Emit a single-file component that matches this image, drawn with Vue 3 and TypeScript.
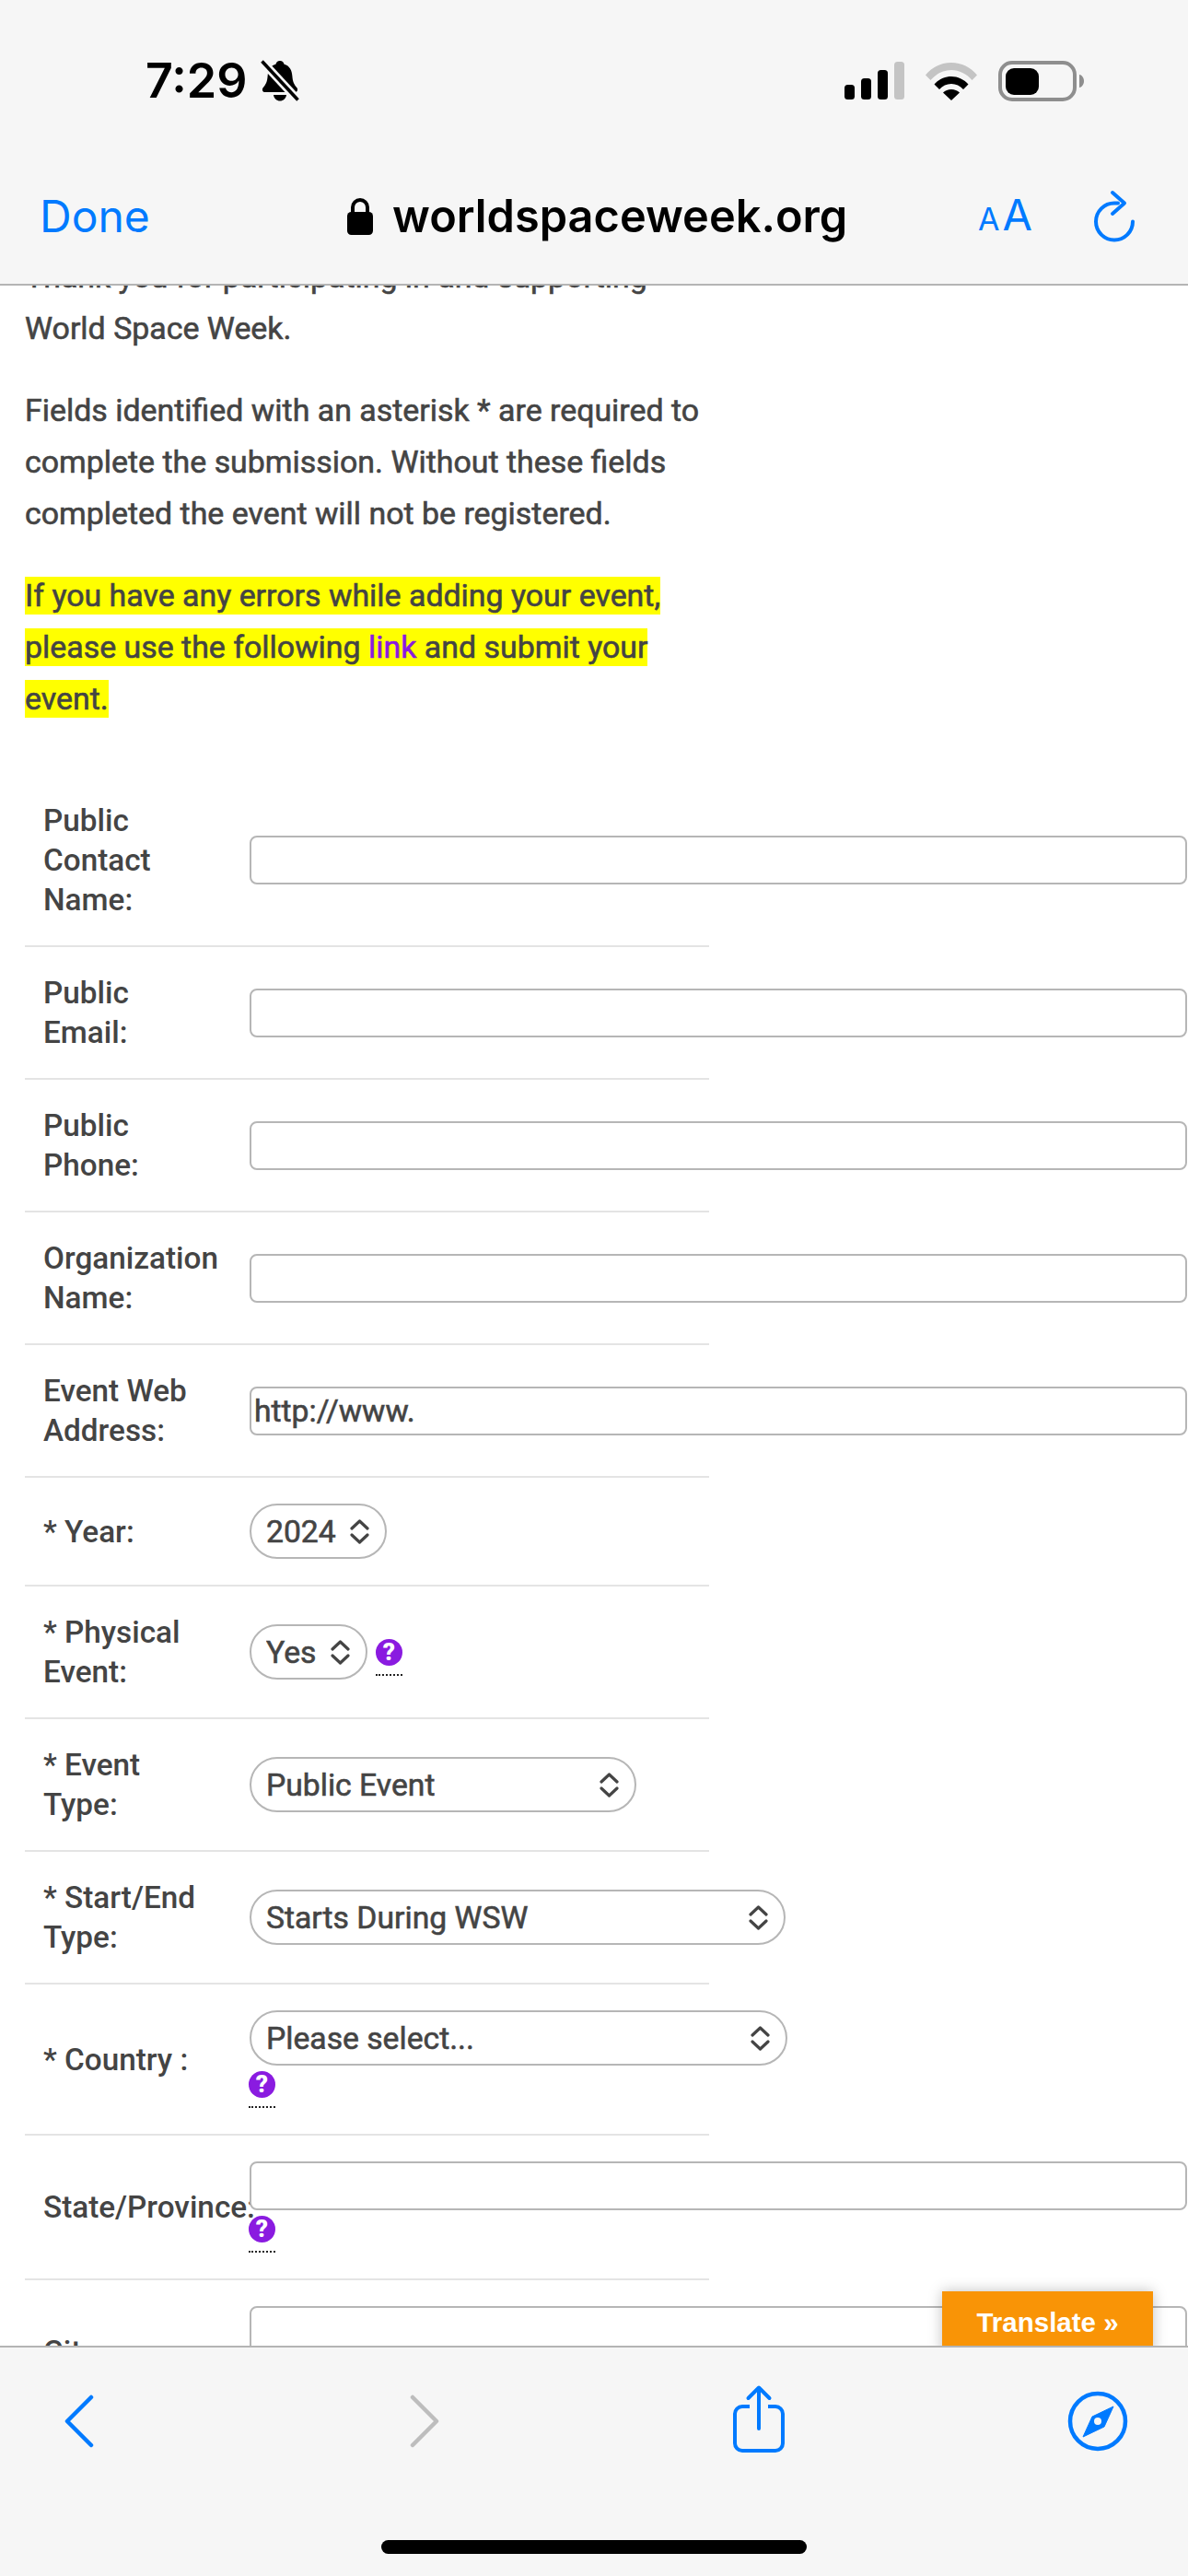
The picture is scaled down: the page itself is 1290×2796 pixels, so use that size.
<script setup lang="ts">
interface Row {
  label: string[]
  kind: 'input' | 'select'
  value?: string
  width?: number
  help?: 'inline' | 'below'
}

const rows: Row[] = [
  { label: ['Public', 'Contact', 'Name:'], kind: 'input' },
  { label: ['Public', 'Email:'], kind: 'input' },
  { label: ['Public', 'Phone:'], kind: 'input' },
  { label: ['Organization', 'Name:'], kind: 'input' },
  { label: ['Event Web', 'Address:'], kind: 'input', value: 'http://www.' },
  { label: ['* Year:'], kind: 'select', value: '2024', width: 149 },
  { label: ['* Physical', 'Event:'], kind: 'select', value: 'Yes', width: 128, help: 'inline' },
  { label: ['* Event', 'Type:'], kind: 'select', value: 'Public Event', width: 420 },
  { label: ['* Start/End', 'Type:'], kind: 'select', value: 'Starts During WSW', width: 582 },
  { label: ['* Country :'], kind: 'select', value: 'Please select...', width: 584, help: 'below' },
  { label: ['State/Province:'], kind: 'input', help: 'below' },
  { label: ['City:'], kind: 'input', help: 'below' },
]
</script>

<template>
  <div class="phone">
    <header class="top">
      <div class="status">
        <div class="clock">
          <span class="time">7:29</span>
          <svg class="bell" width="42" height="46" viewBox="0 0 42 46">
            <path d="M21 1c2.500 0 4 1.600 4.600 3.700 6 1.700 8.400 6.600 8.800 13 .4 6 2 9 5 12.500 1.400 1.700.6 4.800-2 4.800H4.600c-2.600 0-3.400-3.100-2-4.800 3-3.500 4.600-6.500 5-12.500.4-6.400 2.800-11.300 8.800-13C17 2.600 18.500 1 21 1z" fill="#000"/>
            <path d="M14 38h14c-.6 4-3.400 6.500-7 6.500S14.600 42 14 38z" fill="#000"/>
            <path d="M2 2l38 41" stroke="#f6f6f6" stroke-width="9" fill="none"/>
            <path d="M1.500 1.500l39 42" stroke="#000" stroke-width="3.600" fill="none"/>
          </svg>
        </div>
        <div class="indicators">
          <svg width="66" height="42" viewBox="0 0 66 42">
            <rect x="0" y="25" width="11" height="16" rx="3.500" fill="#000"/>
            <rect x="18" y="18" width="11" height="23" rx="3.500" fill="#000"/>
            <rect x="36" y="9" width="11" height="32" rx="3.500" fill="#000"/>
            <rect x="54" y="0" width="11" height="41" rx="3.500" fill="#c4c4c4"/>
          </svg>
          <svg class="wifi" width="58" height="42" viewBox="0 0 58 42">
            <path d="M1 14.500C8 6 18 1 29 1s21 5 28 13.500l-5.500 5.500C45.500 13 37.500 9 29 9s-16.500 4-22.500 11z" fill="#c4c4c4"/>
            <path d="M10.500 24.500C15.500 19 22 16 29 16s13.500 3 18.500 8.500l-5.500 5.500C38.500 26 34 24 29 24s-9.500 2-13 6z" fill="#000"/>
            <path d="M20 33.500c2.400-2.300 5.500-3.500 9-3.500s6.600 1.200 9 3.500L29 42z" fill="#000"/>
          </svg>
          <svg class="battery" width="94" height="44" viewBox="0 0 94 44">
            <rect x="2" y="2" width="81" height="40" rx="13" fill="none" stroke="#8e8e8e" stroke-width="4"/>
            <rect x="8" y="8" width="36" height="29" rx="9" fill="#000"/>
            <path d="M88 15c3 .6 5 3.500 5 7s-2 6.400-5 7z" fill="#8e8e8e"/>
          </svg>
        </div>
      </div>
      <div class="address">
        <span class="done">Done</span>
        <div class="url">
          <svg width="28" height="40" viewBox="0 0 28 40">
            <path d="M6 17v-7a8 8 0 0 1 16 0v7" fill="none" stroke="#000" stroke-width="4"/>
            <rect x="0" y="15" width="28" height="25" rx="4.500" fill="#000"/>
          </svg>
          <span>worldspaceweek.org</span>
        </div>
        <div class="actions">
          <span class="aa"><small>A</small>A</span>
          <svg width="48" height="58" viewBox="0 0 48 58">
            <path d="M44 34.500A20 20 0 1 1 24 14.500H28" fill="none" stroke="#007aff" stroke-width="4" stroke-linecap="round"/>
            <path d="M22 3l13 11.500L22 26" fill="none" stroke="#007aff" stroke-width="4" stroke-linecap="round" stroke-linejoin="round"/>
          </svg>
        </div>
      </div>
    </header>

    <main class="page">
      <div class="scroll">
        <p>Thank you for participating in and supporting World Space Week.</p>
        <p>Fields identified with an asterisk * are required to complete the submission. Without these fields completed the event will not be registered.</p>
        <p><mark>If you have any errors while adding your event, please use the following <a class="link">link</a> and submit your event.</mark></p>

        <form class="form">
          <div v-for="row in rows" :key="row.label.join(' ')" class="row">
            <label class="label"><span v-for="line in row.label" :key="line" class="line">{{ line }}</span></label>
            <div class="field" :class="{ 'field-inline': row.help === 'inline' }">
              <input v-if="row.kind === 'input'" class="text" type="text" :value="row.value ?? ''" />
              <div v-else class="select" :style="{ width: row.width + 'px' }">
                <select class="native">
                  <option>{{ row.value }}</option>
                </select>
                <svg class="updown" width="23" height="27" viewBox="0 0 23 27">
                  <path d="M3 10l8.500-8 8.500 8M3 17l8.500 8 8.500-8" fill="none" stroke="#444" stroke-width="3.200" stroke-linecap="round" stroke-linejoin="round"/>
                </svg>
              </div>
              <span v-if="row.help" class="help" :class="'help-' + row.help"><span class="q">?</span></span>
            </div>
          </div>
        </form>
      </div>
      <div class="translate">Translate »</div>
    </main>

    <footer class="bottom">
      <div class="tools">
        <svg width="32" height="58" viewBox="0 0 32 58">
          <path d="M29 3L3 29l26 26" fill="none" stroke="#007aff" stroke-width="4.500" stroke-linecap="round" stroke-linejoin="round"/>
        </svg>
        <svg class="fwd" width="32" height="58" viewBox="0 0 32 58">
          <path d="M3 3l26 26L3 55" fill="none" stroke="#bdbdbd" stroke-width="4.500" stroke-linecap="round" stroke-linejoin="round"/>
        </svg>
        <svg class="share" width="60" height="76" viewBox="0 0 60 76">
          <path d="M20 24H12a8 8 0 0 0-8 8V64a8 8 0 0 0 8 8H48a8 8 0 0 0 8-8V32a8 8 0 0 0-8-8H40" fill="none" stroke="#007aff" stroke-width="4"/>
          <path d="M30 48V4M18.500 15L30 3.500 41.500 15" fill="none" stroke="#007aff" stroke-width="4" stroke-linecap="round" stroke-linejoin="round"/>
        </svg>
        <svg class="compass" width="66" height="66" viewBox="0 0 66 66">
          <circle cx="33" cy="33" r="30" fill="none" stroke="#007aff" stroke-width="4.500"/>
          <path d="M50 17L40 39 17 50 27 28z" fill="#007aff" stroke="#007aff" stroke-width="1" stroke-linejoin="round"/>
          <circle cx="33" cy="33" r="4" fill="#f6f6f6"/>
        </svg>
      </div>
      <div class="home"></div>
    </footer>
  </div>
</template>

<style scoped>
.phone {
  width: 1290px;
  height: 2796px;
  display: flex;
  flex-direction: column;
  overflow: hidden;
  background: #fff;
  font-family: Roboto, "Noto Sans", sans-serif;
  color: #444;
}
.top {
  height: 310px;
  box-sizing: border-box;
  flex: none;
  background: #f6f6f6;
  border-bottom: 2px solid #b4b4b4;
  padding-top: 63px;
}
.status {
  height: 50px;
  padding: 0 112px 0 158px;
  display: flex;
  justify-content: space-between;
  align-items: center;
}
.clock {
  display: flex;
  align-items: center;
  gap: 15px;
}
.time {
  font: 600 52px/50px Inter, sans-serif;
  color: #000;
}
.indicators {
  display: flex;
  align-items: center;
  gap: 21px;
}
.battery { margin-left: 1px; }
.address {
  margin-top: 94px;
  height: 56px;
  padding: 0 56px 0 43px;
  display: flex;
  align-items: center;
}
.done {
  width: 334px;
  font: 400 48px/56px Inter, sans-serif;
  color: #007aff;
}
.url {
  display: flex;
  align-items: center;
  gap: 21px;
  font: 600 48.700px/56px Inter, sans-serif;
  color: #000;
}
.actions {
  margin-left: auto;
  display: flex;
  align-items: center;
  gap: 65px;
}
.aa {
  font: 400 47px/56px Inter, sans-serif;
  color: #007aff;
}
.aa small {
  font-size: 34px;
  margin-right: 3px;
}
.page {
  flex: 1;
  position: relative;
  overflow: hidden;
  min-height: 0;
}
.scroll {
  margin-top: -37px;
  padding-left: 27px;
  width: 743px;
  font-size: 33.900px;
  font-weight: 400;
  line-height: 56px;
  -webkit-text-stroke: 0.6px currentColor;
}
p {
  margin: 0 0 33px;
}
mark {
  background: #ffff00;
  color: #444;
  padding: 1px 0;
}
.link {
  color: #8a1be0;
}
.form {
  margin-top: 54px;
}
.row {
  display: grid;
  grid-template-columns: 244px 499px;
  align-items: center;
  padding: 28px 0;
  border-bottom: 2px solid #e4e4e4;
}
.row:last-child {
  border-bottom: 0;
}
.label {
  padding-left: 20px;
  font-size: 33.300px;
  font-weight: 500;
  line-height: 43px;
  white-space: nowrap;
  -webkit-text-stroke: 0;
}
.line {
  display: block;
}
.field-inline {
  display: flex;
  align-items: center;
  gap: 9px;
}
.text {
  display: block;
  box-sizing: border-box;
  width: 1018px;
  height: 53px;
  padding: 0 3px;
  border: 2px solid #b6b6b6;
  border-radius: 8px;
  background: #fff;
  font: 400 33.700px Roboto, sans-serif;
  color: #444;
  outline: none;
}
.select {
  position: relative;
  height: 60px;
}
.native {
  appearance: none;
  -webkit-appearance: none;
  box-sizing: border-box;
  width: 100%;
  height: 100%;
  padding: 0 16px;
  border: 2px solid #b6b6b6;
  border-radius: 30px;
  background: #fff;
  font: 400 33.700px Roboto, sans-serif;
  color: #444;
  outline: none;
}
.updown {
  position: absolute;
  right: 18px;
  top: 17px;
}
.help {
  display: inline-flex;
  width: 29px;
  padding-bottom: 9px;
  border-bottom: 2px dotted #222;
}
.help-inline {
  margin-top: 11px;
}
.help-below {
  display: flex;
  margin: 6px 0 0 -1px;
}
.q {
  width: 29px;
  height: 29px;
  border-radius: 50%;
  background: #8a1be0;
  color: #fff;
  font: 900 26px/29px Roboto, sans-serif;
  text-align: center;
  -webkit-text-stroke: 0;
}
.translate {
  position: absolute;
  right: 38px;
  bottom: -10px;
  width: 229px;
  height: 69px;
  box-sizing: border-box;
  padding-top: 17px;
  background: #f99406;
  color: #fff;
  font: 700 29.500px/34px "Liberation Sans", Arial, sans-serif;
  text-align: center;
  box-shadow: 0 0 14px rgba(0, 0, 0, 0.25);
  -webkit-text-stroke: 0;
}
.bottom {
  height: 250px;
  flex: none;
  box-sizing: border-box;
  background: #f6f6f6;
  border-top: 2px solid #b4b4b4;
  position: relative;
  z-index: 1;
}
.tools {
  height: 160px;
  padding-left: 70px;
  display: flex;
  align-items: center;
}
.fwd { margin-left: 343px; }
.share { margin: 0 0 4px 317px; }
.compass { margin-left: 305px; }
.home {
  width: 462px;
  height: 15px;
  border-radius: 8px;
  background: #000;
  margin: 49px 0 0 414px;
}
</style>

<style>
html, body { margin: 0; background: #fff; }
</style>
